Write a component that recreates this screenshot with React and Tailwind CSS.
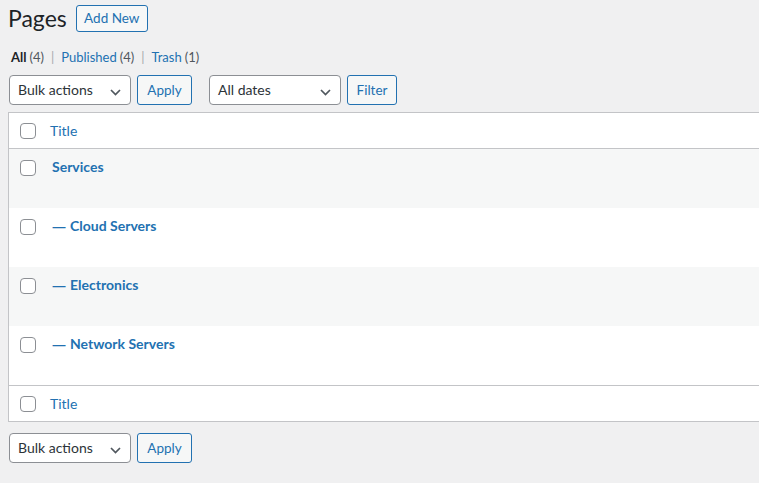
import React from "react";

const font = { fontFamily: '"Segoe UI", Lato, "Noto Sans", sans-serif' };

function Chevron() {
  return (
    <svg width="11" height="7" viewBox="0 0 11 7" className="absolute right-[9px] top-[13px]">
      <path d="M1 1l4.5 4.5L10 1" fill="none" stroke="#50575e" strokeWidth="1.7" />
    </svg>
  );
}

function Select({ label, width }) {
  return (
    <div
      className={`relative h-[30px] ${width} rounded-[4px] border border-[#8c8f94] bg-white pl-[8px] text-[14px] leading-[28px] text-[#2c3338]`}
    >
      {label}
      <Chevron />
    </div>
  );
}

function Button({ label, width }) {
  return (
    <div
      className={`h-[30px] ${width} rounded-[3px] border border-[#2271b1] bg-[#f6f7f7] text-center text-[13.5px] leading-[28px] text-[#2271b1]`}
    >
      {label}
    </div>
  );
}

function Box() {
  return <div className="h-[16px] w-[16px] shrink-0 rounded-[4px] border border-[#8c8f94] bg-white" />;
}

const rows = [
  { title: "Services", child: false },
  { title: "Cloud Servers", child: true },
  { title: "Electronics", child: true },
  { title: "Network Servers", child: true },
];

export default function App() {
  return (
    <div className="h-[483px] w-[759px] overflow-hidden bg-[#f0f0f1] pl-[8px]" style={font}>
      {/* heading */}
      <div className="flex h-[37px] items-start pt-[5px]">
        <h1 className="mt-[-1px] text-[23px] font-normal leading-[28px] text-[#1d2327]">Pages</h1>
        <div className="ml-[9px] h-[27px] w-[72px] rounded-[3px] border border-[#2271b1] bg-[#f6f7f7] text-center text-[13.5px] leading-[25px] text-[#2271b1]">
          Add New
        </div>
      </div>

      {/* status links */}
      <div className="flex h-[38px] items-center pl-[3px] pt-[3px] text-[13px] text-[#50575e]">
        <span className="font-bold text-[#1d2327]">All</span>
        <span className="ml-[3px]">(4)</span>
        <span className="mx-[7px] text-[#a7aaad]">|</span>
        <span className="text-[#2271b1]">Published</span>
        <span className="ml-[3px]">(4)</span>
        <span className="mx-[7px] text-[#a7aaad]">|</span>
        <span className="text-[#2271b1]">Trash</span>
        <span className="ml-[3px]">(1)</span>
      </div>

      {/* top actions */}
      <div className="flex items-center pl-[1px]">
        <Select label="Bulk actions" width="w-[122px]" />
        <div className="ml-[6px]">
          <Button label="Apply" width="w-[55px]" />
        </div>
        <div className="ml-[17px]">
          <Select label="All dates" width="w-[132px]" />
        </div>
        <div className="ml-[6px]">
          <Button label="Filter" width="w-[50px]" />
        </div>
      </div>

      {/* list table */}
      <div className="mt-[7px] w-[780px] border border-[#c3c4c7] bg-white">
        <div className="flex h-[36px] items-center border-b border-[#c3c4c7] pl-[11px]">
          <Box />
          <span className="ml-[14px] text-[14px] text-[#2271b1]">Title</span>
        </div>
        {rows.map((r, i) => (
          <div
            key={r.title}
            className={`flex h-[59px] items-start pl-[11px] pt-[10px] ${i % 2 === 0 ? "bg-[#f6f7f7]" : "bg-white"}`}
          >
            <div className="pt-[1px]">
              <Box />
            </div>
            <span className="ml-[16px] text-[14px] font-bold leading-[16px] text-[#2271b1]">
              {r.child ? <span className="mr-[4px] font-['Noto_Sans'] font-semibold">—</span> : null}
              {r.title}
            </span>
          </div>
        ))}
        <div className="flex h-[36px] items-center border-t border-[#c3c4c7] pl-[11px]">
          <Box />
          <span className="ml-[14px] text-[14px] text-[#2271b1]">Title</span>
        </div>
      </div>

      {/* bottom actions */}
      <div className="mt-[11px] flex items-center pl-[1px]">
        <Select label="Bulk actions" width="w-[122px]" />
        <div className="ml-[6px]">
          <Button label="Apply" width="w-[55px]" />
        </div>
      </div>
    </div>
  );
}
